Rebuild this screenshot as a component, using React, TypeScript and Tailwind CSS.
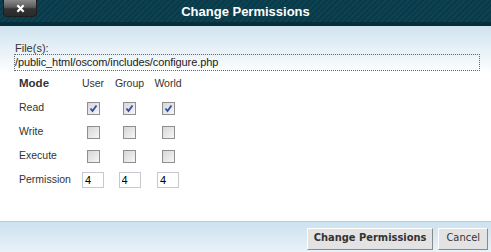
import React from "react";

const COLS = ["User", "Group", "World"];

const ROWS = [
  { label: "Read", checked: [true, true, true] },
  { label: "Write", checked: [false, false, false] },
  { label: "Execute", checked: [false, false, false] },
];

function Check({ on }: { on: boolean }) {
  return (
    <span className="relative inline-block w-[13px] h-[13px] border border-[#8e8f8f] bg-[linear-gradient(135deg,#d6d6d6,#f6f6f6)]">
      {on && (
        <svg viewBox="0 0 11 11" className="absolute inset-0 w-[11px] h-[11px]">
          <path d="M2.5 5.5 L4.5 8 L8.5 2.5" fill="none" stroke="#2c4fa3" strokeWidth="1.8" />
        </svg>
      )}
    </span>
  );
}

export default function App() {
  return (
    <div className="w-[491px] h-[252px] flex flex-col overflow-hidden bg-white font-['Liberation_Sans',Arial,sans-serif]">
      {/* Title bar */}
      <header className="relative h-[26px] shrink-0 border-b-4 border-[#062f3b] bg-[repeating-linear-gradient(135deg,#0d4252_0px,#0d4252_2px,#0a3a48_2px,#0a3a48_4px)] flex items-center justify-center">
        <button className="absolute left-[3px] top-0 w-[34px] h-[17px] rounded-b-[4px] border border-t-0 border-[#1e1e1e] bg-[linear-gradient(to_bottom,#8a8a8a,#5a5a5a_45%,#333_55%,#2a2a2a)] flex items-center justify-center">
          <svg viewBox="0 0 10 10" className="w-[9px] h-[9px]">
            <path d="M1.5 1.5 L8.5 8.5 M8.5 1.5 L1.5 8.5" stroke="#fff" strokeWidth="2.4" />
          </svg>
        </button>
        <span className="text-white font-bold text-[13px] leading-none mt-[1px]">Change Permissions</span>
      </header>

      {/* Body */}
      <main className="flex-1 bg-[linear-gradient(to_bottom,#d0e3ef_0px,#ffffff_48px)] pt-[16px] px-[14px] text-[11px] text-[#333]">
        <div className="leading-[12px] pl-[1px]">File(s):</div>
        <div className="h-[17px] w-[466px] border border-dotted border-[#666] flex items-center leading-none text-[#222] tracking-[-0.1px]">
          /public_html/oscom/includes/configure.php
        </div>

        <div className="mt-[1px] grid grid-cols-[56px_36px_37px_40px] auto-rows-[24px] items-center pl-[5px] text-[10.5px]">
          <div className="font-bold text-[11.5px]">Mode</div>
          {COLS.map((c) => (
            <div key={c} className="text-center">
              {c}
            </div>
          ))}

          {ROWS.map((r) => (
            <React.Fragment key={r.label}>
              <div>{r.label}</div>
              {r.checked.map((on, i) => (
                <div key={i} className="flex justify-center">
                  <Check on={on} />
                </div>
              ))}
            </React.Fragment>
          ))}

          <div>Permission</div>
          {COLS.map((c) => (
            <div key={c} className="flex justify-center">
              <input
                readOnly
                value="4"
                className="w-[22px] h-[16px] border border-[#c6c9cf] bg-white px-[2px] text-[11px] text-black outline-none"
              />
            </div>
          ))}
        </div>
      </main>

      {/* Footer */}
      <footer className="h-[31px] shrink-0 border-t border-[#c8c8c8] bg-[linear-gradient(to_bottom,#cce1ef,#e9f2f8)] flex items-center justify-end gap-[5px] pr-[3px] pt-[3px] font-['DejaVu_Sans_Condensed','DejaVu_Sans',sans-serif] text-[11px] text-[#333]">
        <button className="h-[22px] px-[6px] bg-[#e3e3e3] border border-t-white border-l-white border-r-[#8a8a8a] border-b-[#8a8a8a] font-bold">
          Change Permissions
        </button>
        <button className="h-[22px] px-[7px] bg-[#e3e3e3] border border-t-white border-l-white border-r-[#8a8a8a] border-b-[#8a8a8a]">
          Cancel
        </button>
      </footer>
    </div>
  );
}
